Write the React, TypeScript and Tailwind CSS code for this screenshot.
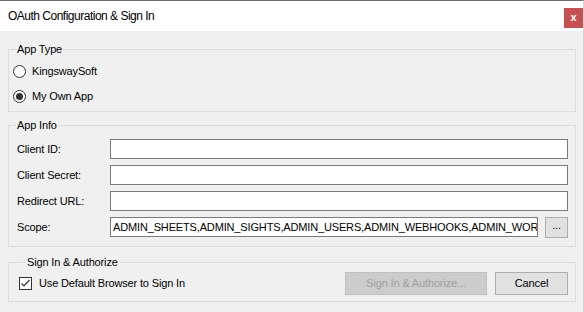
import React from 'react'

const SCOPE = 'ADMIN_SHEETS,ADMIN_SIGHTS,ADMIN_USERS,ADMIN_WEBHOOKS,ADMIN_WORKSPACES'

function Radio({ checked, label }: { checked?: boolean; label: string }) {
  return (
    <div className="flex h-[20px] items-center gap-[6px]">
      <span className="flex h-[13px] w-[13px] items-center justify-center rounded-full border border-[#333333] bg-white">
        {checked && <span className="h-[7px] w-[7px] rounded-full bg-[#333333]" />}
      </span>
      <span>{label}</span>
    </div>
  )
}

function Field({ label, children }: { label: string; children?: React.ReactNode }) {
  return (
    <div className="flex h-[20px] items-center">
      <span className="w-[93px] shrink-0">{label}</span>
      {children ?? <div className="h-[20px] w-[458px] border border-[#7a7a7a] bg-white" />}
    </div>
  )
}

export default function App() {
  return (
    <div className="flex h-[312px] w-[584px] flex-col overflow-hidden border-t border-r border-t-[#6f6f6f] border-r-[#d4d4d4] bg-[#f0f0f0] font-['Liberation_Sans',Arial,sans-serif] text-[11px] tracking-[-0.15px] text-black">
      {/* title bar */}
      <div className="flex h-[30px] shrink-0 items-start justify-between bg-white">
        <span className="mt-[8px] pl-[8px] text-[12px] leading-[14px] tracking-[-0.5px]">OAuth Configuration &amp; Sign In</span>
        <div className="mt-[7px] flex h-[20px] w-[19px] items-center justify-center bg-[#c75050] pb-[2px] text-[11px] font-bold text-white">x</div>
      </div>

      <div className="flex flex-col px-[8px]">
        <fieldset className="mt-[11px] h-[70px] w-[568px] border border-[#dcdcdc] pl-[4px]">
          <legend className="ml-[3px] px-[1px] leading-[14px]">App Type</legend>
          <div className="flex flex-col gap-[5px] pt-[5px]">
            <Radio label="KingswaySoft" />
            <Radio checked label="My Own App" />
          </div>
        </fieldset>

        <fieldset className="mt-[6px] h-[129px] w-[568px] border border-[#dcdcdc] pl-[8px] pr-[7px]">
          <legend className="-ml-[1px] px-[1px] leading-[14px]">App Info</legend>
          <div className="flex flex-col gap-[6px] pt-[7px]">
            <Field label="Client ID:" />
            <Field label="Client Secret:" />
            <Field label="Redirect URL:" />
            <Field label="Scope:">
              <div className="flex items-center gap-[7px]">
                <div className="h-[20px] w-[428px] overflow-hidden whitespace-nowrap border border-[#7a7a7a] bg-white pl-[2px] leading-[18px]">
                  {SCOPE}
                </div>
                <div className="flex h-[21px] w-[23px] items-center justify-center border border-[#adadad] bg-[#e1e1e1] pb-[3px]">...</div>
              </div>
            </Field>
          </div>
        </fieldset>

        <fieldset className="mt-[8px] h-[47px] w-[568px] border border-[#dcdcdc] pl-[10px] pr-[7px]">
          <legend className="ml-[7px] px-[1px] leading-[14px]">Sign In &amp; Authorize</legend>
          <div className="flex h-[26px] items-center justify-between pt-[2px]">
            <div className="flex items-center gap-[7px]">
              <span className="flex h-[13px] w-[13px] items-center justify-center border border-[#333333] bg-white">
                <svg width="11" height="11" viewBox="0 0 11 11" fill="none">
                  <path d="M1.5 5.5 L4 8 L9.5 2" stroke="#333333" strokeWidth="1.2" />
                </svg>
              </span>
              <span>Use Default Browser to Sign In</span>
            </div>
            <div className="flex gap-[8px]">
              <div className="flex h-[23px] w-[142px] items-center justify-center border border-[#bfbfbf] bg-[#cccccc] text-[#a0a0a0]">Sign In &amp; Authorize...</div>
              <div className="flex h-[23px] w-[73px] items-center justify-center border border-[#adadad] bg-[#e1e1e1]">Cancel</div>
            </div>
          </div>
        </fieldset>
      </div>
    </div>
  )
}
